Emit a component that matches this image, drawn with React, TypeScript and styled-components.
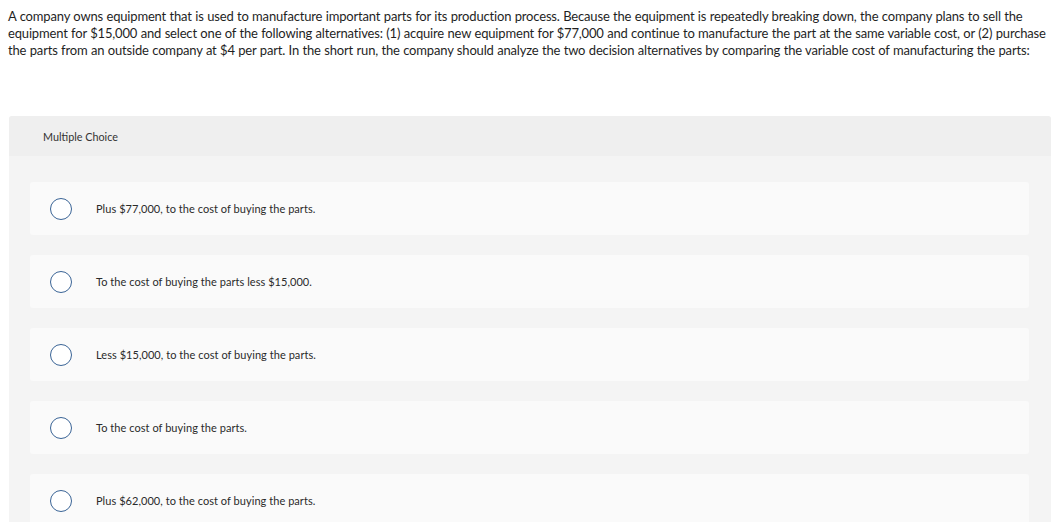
import React from "react";
import styled, { createGlobalStyle } from "styled-components";

const Global = createGlobalStyle`
  html, body { margin: 0; padding: 0; background: #ffffff; }
  body {
    padding: 8px 6px 0 8px;
    font-family: "Lato", "Liberation Sans", Arial, sans-serif;
    color: #222;
    overflow: hidden;
  }
`;

const Question = styled.p`
  margin: 0;
  font-size: 13px;
  line-height: 17px;
  color: #1f1f1f;
  letter-spacing: -0.17px;
  word-spacing: 0.3px;
`;

const Card = styled.section`
  margin: 57px 0 0 1px;
  background: #f4f4f4;
  border-radius: 3px;
  overflow: hidden;
`;

const Header = styled.div`
  height: 40px;
  display: flex;
  align-items: center;
  padding-left: 34px;
  background: #efefef;
  font-size: 10.8px;
  color: #333;
`;

const List = styled.div`
  display: flex;
  flex-direction: column;
  gap: 20px;
  padding: 26px 22px 20px 21px;
`;

const Option = styled.label`
  height: 53px;
  display: flex;
  align-items: center;
  background: #fafafa;
  border-radius: 3px;
  padding-left: 20px;
  font-size: 11px;
  color: #2a2a2a;
  letter-spacing: 0.05px;
  cursor: pointer;
`;

const Radio = styled.span`
  width: 20px;
  height: 20px;
  border: 1.5px solid #3a6496;
  border-radius: 50%;
  background: #fff;
  flex: none;
  margin-right: 24px;
`;

const options = [
  "Plus $77,000, to the cost of buying the parts.",
  "To the cost of buying the parts less $15,000.",
  "Less $15,000, to the cost of buying the parts.",
  "To the cost of buying the parts.",
  "Plus $62,000, to the cost of buying the parts.",
];

export default function App() {
  return (
    <>
      <Global />
      <Question>
        A company owns equipment that is used to manufacture important parts for its production process. Because the equipment is repeatedly breaking down, the company plans to sell the equipment for $15,000 and select one of the following alternatives: (1) acquire new equipment for $77,000 and continue to manufacture the part at the same variable cost, or (2) purchase the parts from an outside company at $4 per part. In the short run, the company should analyze the two decision alternatives by comparing the variable cost of manufacturing the parts:
      </Question>
      <Card>
        <Header>Multiple Choice</Header>
        <List>
          {options.map((o) => (
            <Option key={o}>
              <Radio />
              {o}
            </Option>
          ))}
        </List>
      </Card>
    </>
  );
}
